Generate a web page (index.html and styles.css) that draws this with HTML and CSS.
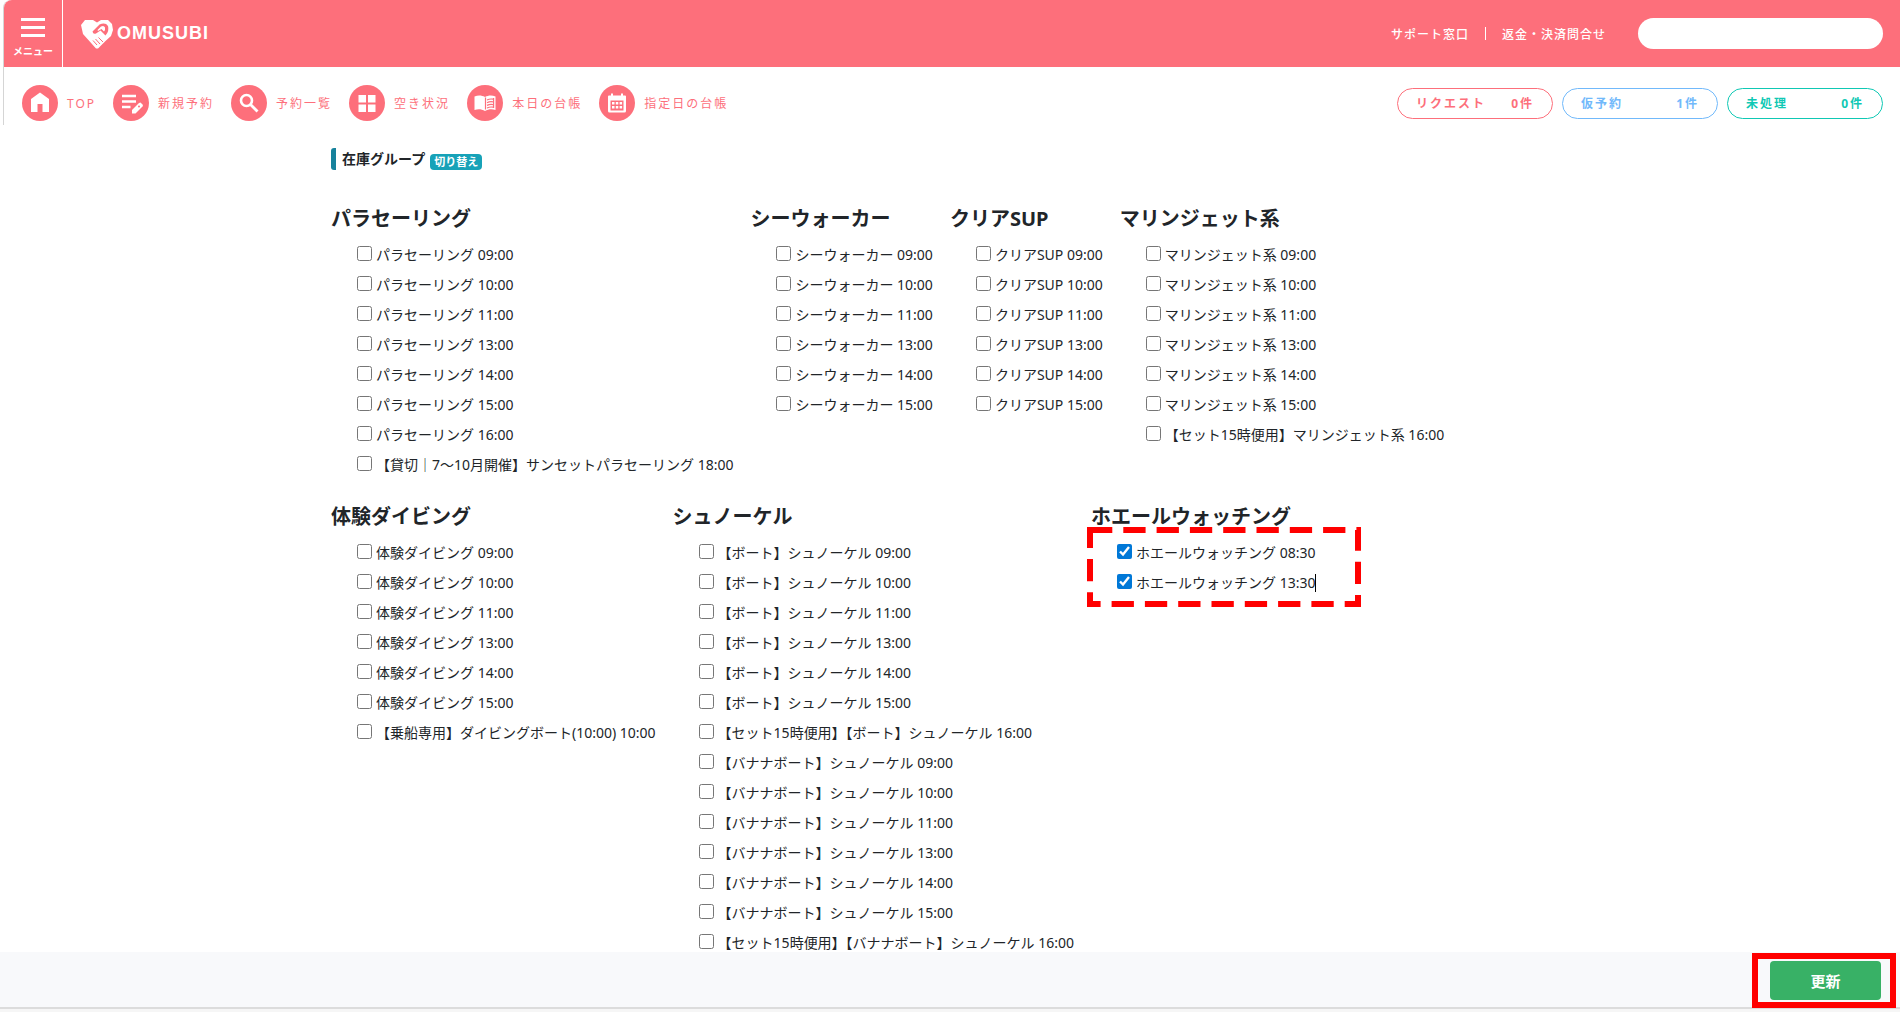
FILE: index.html
```
<!DOCTYPE html>
<html lang="ja">
<head>
  <meta charset="UTF-8">
  <meta name="viewport" content="width=device-width, initial-scale=1.0">
  <title>在庫グループ</title>
  <link rel="stylesheet" href="styles.css">
</head>
<body>
  <div class="top-area">
    <!-- ヘッダー -->
    <header class="header">
      <button class="menu-button" type="button">
        <span class="menu-line"></span>
        <span class="menu-line"></span>
        <span class="menu-line"></span>
        <span class="menu-text">メニュー</span>
      </button>
      <a class="logo" href="#">
        <svg width="32" height="30" viewBox="0 0 32 30">
          <path fill="#fff" d="M4 1h8l4 2.500L20 1h7l4 4 1 6-2 6-5.500 5-7.500 7.500h-2L2 15 0 6z"/>
          <path fill="#fd6f7b" d="M11.500 12.500L18.500 5.500q6-2.500 8.500 1.500 1.500 5-2.500 9.500l-5-5-4.500 3q-3 1-3.500-2z"/>
          <path fill="#fff" d="M16.500 11l3.500-3.500q3-1.500 4 1 .5 2-1 4l-2.500-2.500-3.500 2z"/>
          <path fill="none" stroke="#fd6f7b" stroke-width="1" d="M12 21.500l4 4.500M14.500 20l4.500 5M17.500 18.500l4.500 4.500"/>
        </svg>
        <span class="logo-text">OMUSUBI</span>
      </a>
      <div class="header-right">
        <a class="header-link" href="#">サポート窓口</a>
        <span class="divider"></span>
        <a class="header-link" href="#">返金・決済問合せ</a>
        <input class="search" type="text" aria-label="検索">
      </div>
    </header>

    <!-- ナビ -->
    <div class="nav-bar">
      <nav class="nav">
        <a class="nav-item" href="#">
          <svg class="nav-icon" viewBox="0 0 36 36"><circle cx="18" cy="18" r="18"/><path fill="#fff" d="M18 7.500L27 14v13h-6.500v-8h-5v8H9V14z"/></svg>
          <span>TOP</span>
        </a>
        <a class="nav-item" href="#">
          <svg class="nav-icon" viewBox="0 0 36 36"><circle cx="18" cy="18" r="18"/><path fill="none" stroke="#fff" stroke-width="2.400" d="M9 11h14M9 16.500h14M9 22h8.500"/><path fill="#fff" d="M19 25l7-7 1.500-.5 2.500 2.500-.5 1.500-7 7H19z"/><circle cx="26" cy="21.500" r="1"/></svg>
          <span>新規予約</span>
        </a>
        <a class="nav-item" href="#">
          <svg class="nav-icon" viewBox="0 0 36 36"><circle cx="18" cy="18" r="18"/><circle cx="15.500" cy="15.500" r="5.500" stroke="#fff" stroke-width="2.600"/><path stroke="#fff" stroke-width="2.800" d="M19.500 19.500l7 7"/></svg>
          <span>予約一覧</span>
        </a>
        <a class="nav-item" href="#">
          <svg class="nav-icon" viewBox="0 0 36 36"><circle cx="18" cy="18" r="18"/><path fill="#fff" d="M9.500 10h7.500v7.500H9.500zM19 10h7.500v7.500H19zM9.500 19.500h7.500v7.500H9.500zM19 19.500h7.500v7.500H19z"/></svg>
          <span>空き状況</span>
        </a>
        <a class="nav-item" href="#">
          <svg class="nav-icon" viewBox="0 0 36 36"><circle cx="18" cy="18" r="18"/><path fill="#fff" d="M7.500 11.500c3.500-1.500 7-1.500 10.500.5 3.500-2 7-2 10.500-.5v13.500c-3.500-1-7-1-10.500 1-3.500-2-7-2-10.500-1z"/><path fill="none" stroke="#fd6f7b" stroke-width="1.200" d="M18.500 12.500v12M20 15q3-1.500 6-.8M20 17.700q3-1.500 6-.8M20 20.400q3-1.500 6-.8M20 23q3-1.500 6-.8M26.600 13v10"/></svg>
          <span>本日の台帳</span>
        </a>
        <a class="nav-item" href="#">
          <svg class="nav-icon" viewBox="0 0 36 36"><circle cx="18" cy="18" r="18"/><path fill="#fff" d="M12 8.500h2v2h8v-2h2v2h2q1 0 1 1V26q0 1.500-1.500 1.500h-15Q9 27.500 9 26V11.500q0-1 1-1h2z"/><path d="M11.500 15.500h13v10h-13z"/><path fill="#fff" d="M13 17h2.500v2.500H13zM16.800 17h2.500v2.500h-2.500zM20.600 17h2.500v2.500h-2.500zM13 21h2.500v2.500H13zM16.800 21h2.500v2.500h-2.500zM20.600 21h2.500v2.500h-2.500z"/></svg>
          <span>指定日の台帳</span>
        </a>
      </nav>
      <div class="status-list">
        <a class="status status-request" href="#"><span>リクエスト</span><span>0件</span></a>
        <a class="status status-temp" href="#"><span>仮予約</span><span>1件</span></a>
        <a class="status status-open" href="#"><span>未処理</span><span>0件</span></a>
      </div>
    </div>
  </div>

  <!-- 在庫グループ -->
  <main class="main">
    <div class="title-row">
      <h1 class="title">在庫グループ</h1>
      <button class="badge" type="button">切り替え</button>
    </div>

    <div class="groups">
      <section class="group">
        <h2>パラセーリング</h2>
        <ul>
          <li><label><input type="checkbox">パラセーリング 09:00</label></li>
          <li><label><input type="checkbox">パラセーリング 10:00</label></li>
          <li><label><input type="checkbox">パラセーリング 11:00</label></li>
          <li><label><input type="checkbox">パラセーリング 13:00</label></li>
          <li><label><input type="checkbox">パラセーリング 14:00</label></li>
          <li><label><input type="checkbox">パラセーリング 15:00</label></li>
          <li><label><input type="checkbox">パラセーリング 16:00</label></li>
          <li><label><input type="checkbox">【貸切｜7～10月開催】サンセットパラセーリング 18:00</label></li>
        </ul>
      </section>

      <section class="group">
        <h2>シーウォーカー</h2>
        <ul>
          <li><label><input type="checkbox">シーウォーカー 09:00</label></li>
          <li><label><input type="checkbox">シーウォーカー 10:00</label></li>
          <li><label><input type="checkbox">シーウォーカー 11:00</label></li>
          <li><label><input type="checkbox">シーウォーカー 13:00</label></li>
          <li><label><input type="checkbox">シーウォーカー 14:00</label></li>
          <li><label><input type="checkbox">シーウォーカー 15:00</label></li>
        </ul>
      </section>

      <section class="group">
        <h2>クリアSUP</h2>
        <ul>
          <li><label><input type="checkbox">クリアSUP 09:00</label></li>
          <li><label><input type="checkbox">クリアSUP 10:00</label></li>
          <li><label><input type="checkbox">クリアSUP 11:00</label></li>
          <li><label><input type="checkbox">クリアSUP 13:00</label></li>
          <li><label><input type="checkbox">クリアSUP 14:00</label></li>
          <li><label><input type="checkbox">クリアSUP 15:00</label></li>
        </ul>
      </section>

      <section class="group">
        <h2>マリンジェット系</h2>
        <ul>
          <li><label><input type="checkbox">マリンジェット系 09:00</label></li>
          <li><label><input type="checkbox">マリンジェット系 10:00</label></li>
          <li><label><input type="checkbox">マリンジェット系 11:00</label></li>
          <li><label><input type="checkbox">マリンジェット系 13:00</label></li>
          <li><label><input type="checkbox">マリンジェット系 14:00</label></li>
          <li><label><input type="checkbox">マリンジェット系 15:00</label></li>
          <li><label><input type="checkbox">【セット15時便用】マリンジェット系 16:00</label></li>
        </ul>
      </section>

      <section class="group">
        <h2>体験ダイビング</h2>
        <ul>
          <li><label><input type="checkbox">体験ダイビング 09:00</label></li>
          <li><label><input type="checkbox">体験ダイビング 10:00</label></li>
          <li><label><input type="checkbox">体験ダイビング 11:00</label></li>
          <li><label><input type="checkbox">体験ダイビング 13:00</label></li>
          <li><label><input type="checkbox">体験ダイビング 14:00</label></li>
          <li><label><input type="checkbox">体験ダイビング 15:00</label></li>
          <li><label><input type="checkbox">【乗船専用】ダイビングボート(10:00) 10:00</label></li>
        </ul>
      </section>

      <section class="group">
        <h2>シュノーケル</h2>
        <ul>
          <li><label><input type="checkbox">【ボート】シュノーケル 09:00</label></li>
          <li><label><input type="checkbox">【ボート】シュノーケル 10:00</label></li>
          <li><label><input type="checkbox">【ボート】シュノーケル 11:00</label></li>
          <li><label><input type="checkbox">【ボート】シュノーケル 13:00</label></li>
          <li><label><input type="checkbox">【ボート】シュノーケル 14:00</label></li>
          <li><label><input type="checkbox">【ボート】シュノーケル 15:00</label></li>
          <li><label><input type="checkbox">【セット15時便用】【ボート】シュノーケル 16:00</label></li>
          <li><label><input type="checkbox">【バナナボート】シュノーケル 09:00</label></li>
          <li><label><input type="checkbox">【バナナボート】シュノーケル 10:00</label></li>
          <li><label><input type="checkbox">【バナナボート】シュノーケル 11:00</label></li>
          <li><label><input type="checkbox">【バナナボート】シュノーケル 13:00</label></li>
          <li><label><input type="checkbox">【バナナボート】シュノーケル 14:00</label></li>
          <li><label><input type="checkbox">【バナナボート】シュノーケル 15:00</label></li>
          <li><label><input type="checkbox">【セット15時便用】【バナナボート】シュノーケル 16:00</label></li>
        </ul>
      </section>

      <section class="group">
        <h2>ホエールウォッチング</h2>
        <ul>
          <li><label><input type="checkbox" checked>ホエールウォッチング 08:30</label></li>
          <li><label><input type="checkbox" checked>ホエールウォッチング 13:30<span class="caret"></span></label></li>
        </ul>
        <!-- 赤い点線の枠 -->
        <svg class="dashed-frame" width="274" height="80" viewBox="0 0 274 80">
          <path d="M3 3h268v74H3z"/>
        </svg>
      </section>
    </div>
  </main>

  <!-- 更新ボタン -->
  <footer class="footer">
    <div class="update-frame">
      <button class="update-button" type="submit">更新</button>
    </div>
  </footer>
</body>
</html>
```
FILE: styles.css
```
* {
  box-sizing: border-box;
}
body {
  margin: 0;
  font-family: 'Noto Sans', 'Noto Sans CJK JP', sans-serif;
  font-size: 14px;
  color: #212529;
  background: #fff;
}
a {
  text-decoration: none;
}
button {
  font-family: inherit;
  border: none;
  cursor: pointer;
}

/* ヘッダー */
.top-area {
  margin-left: 3px;
  border-left: 1px solid #d5d5d5;
  border-top-left-radius: 8px;
}
.header {
  display: flex;
  align-items: center;
  height: 67px;
  padding-right: 17px;
  background: #fd6f7b;
  border-top-left-radius: 8px;
}
.menu-button {
  display: flex;
  flex-direction: column;
  align-items: center;
  gap: 5px;
  width: 59px;
  height: 67px;
  padding: 18px 0 0;
  background: none;
  border-right: 1px solid #fff;
}
.menu-line {
  width: 24px;
  height: 3px;
  background: #fff;
}
.menu-text {
  color: #fff;
  font-size: 10px;
  font-weight: bold;
  line-height: 18px;
}
.logo {
  display: flex;
  align-items: center;
  gap: 4px;
  margin-left: 18px;
}
.logo-text {
  color: #fff;
  font-family: 'Liberation Sans', sans-serif;
  font-size: 18px;
  font-weight: bold;
  letter-spacing: 1px;
}
.header-right {
  display: flex;
  align-items: center;
  margin-left: auto;
}
.header-link {
  color: #fff;
  font-size: 12px;
  font-weight: 500;
  letter-spacing: 1px;
}
.divider {
  width: 1px;
  height: 13px;
  margin: 0 16px;
  background: #fff;
}
.search {
  width: 245px;
  height: 31px;
  margin-left: 32px;
  padding: 0 16px;
  border: none;
  border-radius: 16px;
  background: #fff;
}

/* ナビ */
.nav-bar {
  display: flex;
  align-items: center;
  justify-content: space-between;
  height: 58px;
  padding: 14px 17px 0 18px;
}
.nav {
  display: flex;
  gap: 17px;
}
.nav-item {
  display: flex;
  align-items: center;
  gap: 9px;
  color: #fd6f7b;
  font-size: 12px;
  letter-spacing: 2px;
}
.nav-icon {
  width: 36px;
  height: 36px;
  fill: #fd6f7b;
}
.status-list {
  display: flex;
  gap: 9px;
}
.status {
  display: flex;
  align-items: center;
  justify-content: space-between;
  width: 156px;
  height: 31px;
  padding: 0 18px;
  border: 1px solid;
  border-radius: 16px;
  font-size: 12px;
  font-weight: bold;
  letter-spacing: 2px;
}
.status-request {
  color: #fd6f7b;
}
.status-temp {
  color: #71b9fb;
}
.status-open {
  color: #0fc8b4;
}

/* 在庫グループ */
.main {
  max-width: 1238px;
  margin: 0 auto;
  padding-top: 23px;
}
.title-row {
  display: flex;
  align-items: center;
  gap: 5px;
}
.title {
  margin: 0;
  padding-left: 6px;
  border-left: 5px solid #17829c;
  border-radius: 3px 0 0 3px;
  font-size: 14px;
  font-weight: bold;
  line-height: 22px;
}
.badge {
  height: 16px;
  margin-top: 6px;
  padding: 0 4px;
  border-radius: 4px;
  background: #17a2b8;
  color: #fff;
  font-size: 11px;
  font-weight: bold;
  line-height: 16px;
}
.groups {
  display: flex;
  flex-wrap: wrap;
  gap: 21px 17px;
  margin-top: 33px;
}
.group {
  position: relative;
}
.group h2 {
  margin: 0 0 5px;
  font-size: 20px;
  font-weight: bold;
  line-height: 32px;
}
.group ul {
  margin: 0;
  padding-left: 26px;
  list-style: none;
}
.group li {
  height: 30px;
  line-height: 30px;
  white-space: nowrap;
}
.group label {
  display: flex;
}
.group input {
  width: 15px;
  height: 15px;
  margin: 6px 4px 0 0;
  accent-color: #0078d7;
}
.caret {
  width: 1px;
  height: 18px;
  margin: 6px 0 0 -1px;
  background: #000;
}
.dashed-frame {
  position: absolute;
  top: 26px;
  left: -4px;
  fill: none;
  stroke: #f00;
  stroke-width: 6;
  stroke-dasharray: 22.300 11;
}

/* 更新ボタン */
.footer {
  position: fixed;
  left: 0;
  right: 0;
  bottom: 0;
  display: flex;
  justify-content: flex-end;
  height: 60px;
  padding: 1px 4px 0;
  background: linear-gradient(#f8f9fb 55px, #dcdcdc 55px, #dcdcdc 57px, #f6f6f6 57px);
}
.update-frame {
  height: 55px;
  padding: 2px 9px 2px 12px;
  border: 6px solid #f00;
}
.update-button {
  width: 111px;
  height: 39px;
  border-radius: 4px;
  background: #38b166;
  color: #fff;
  font-size: 15px;
  font-weight: bold;
}
```
